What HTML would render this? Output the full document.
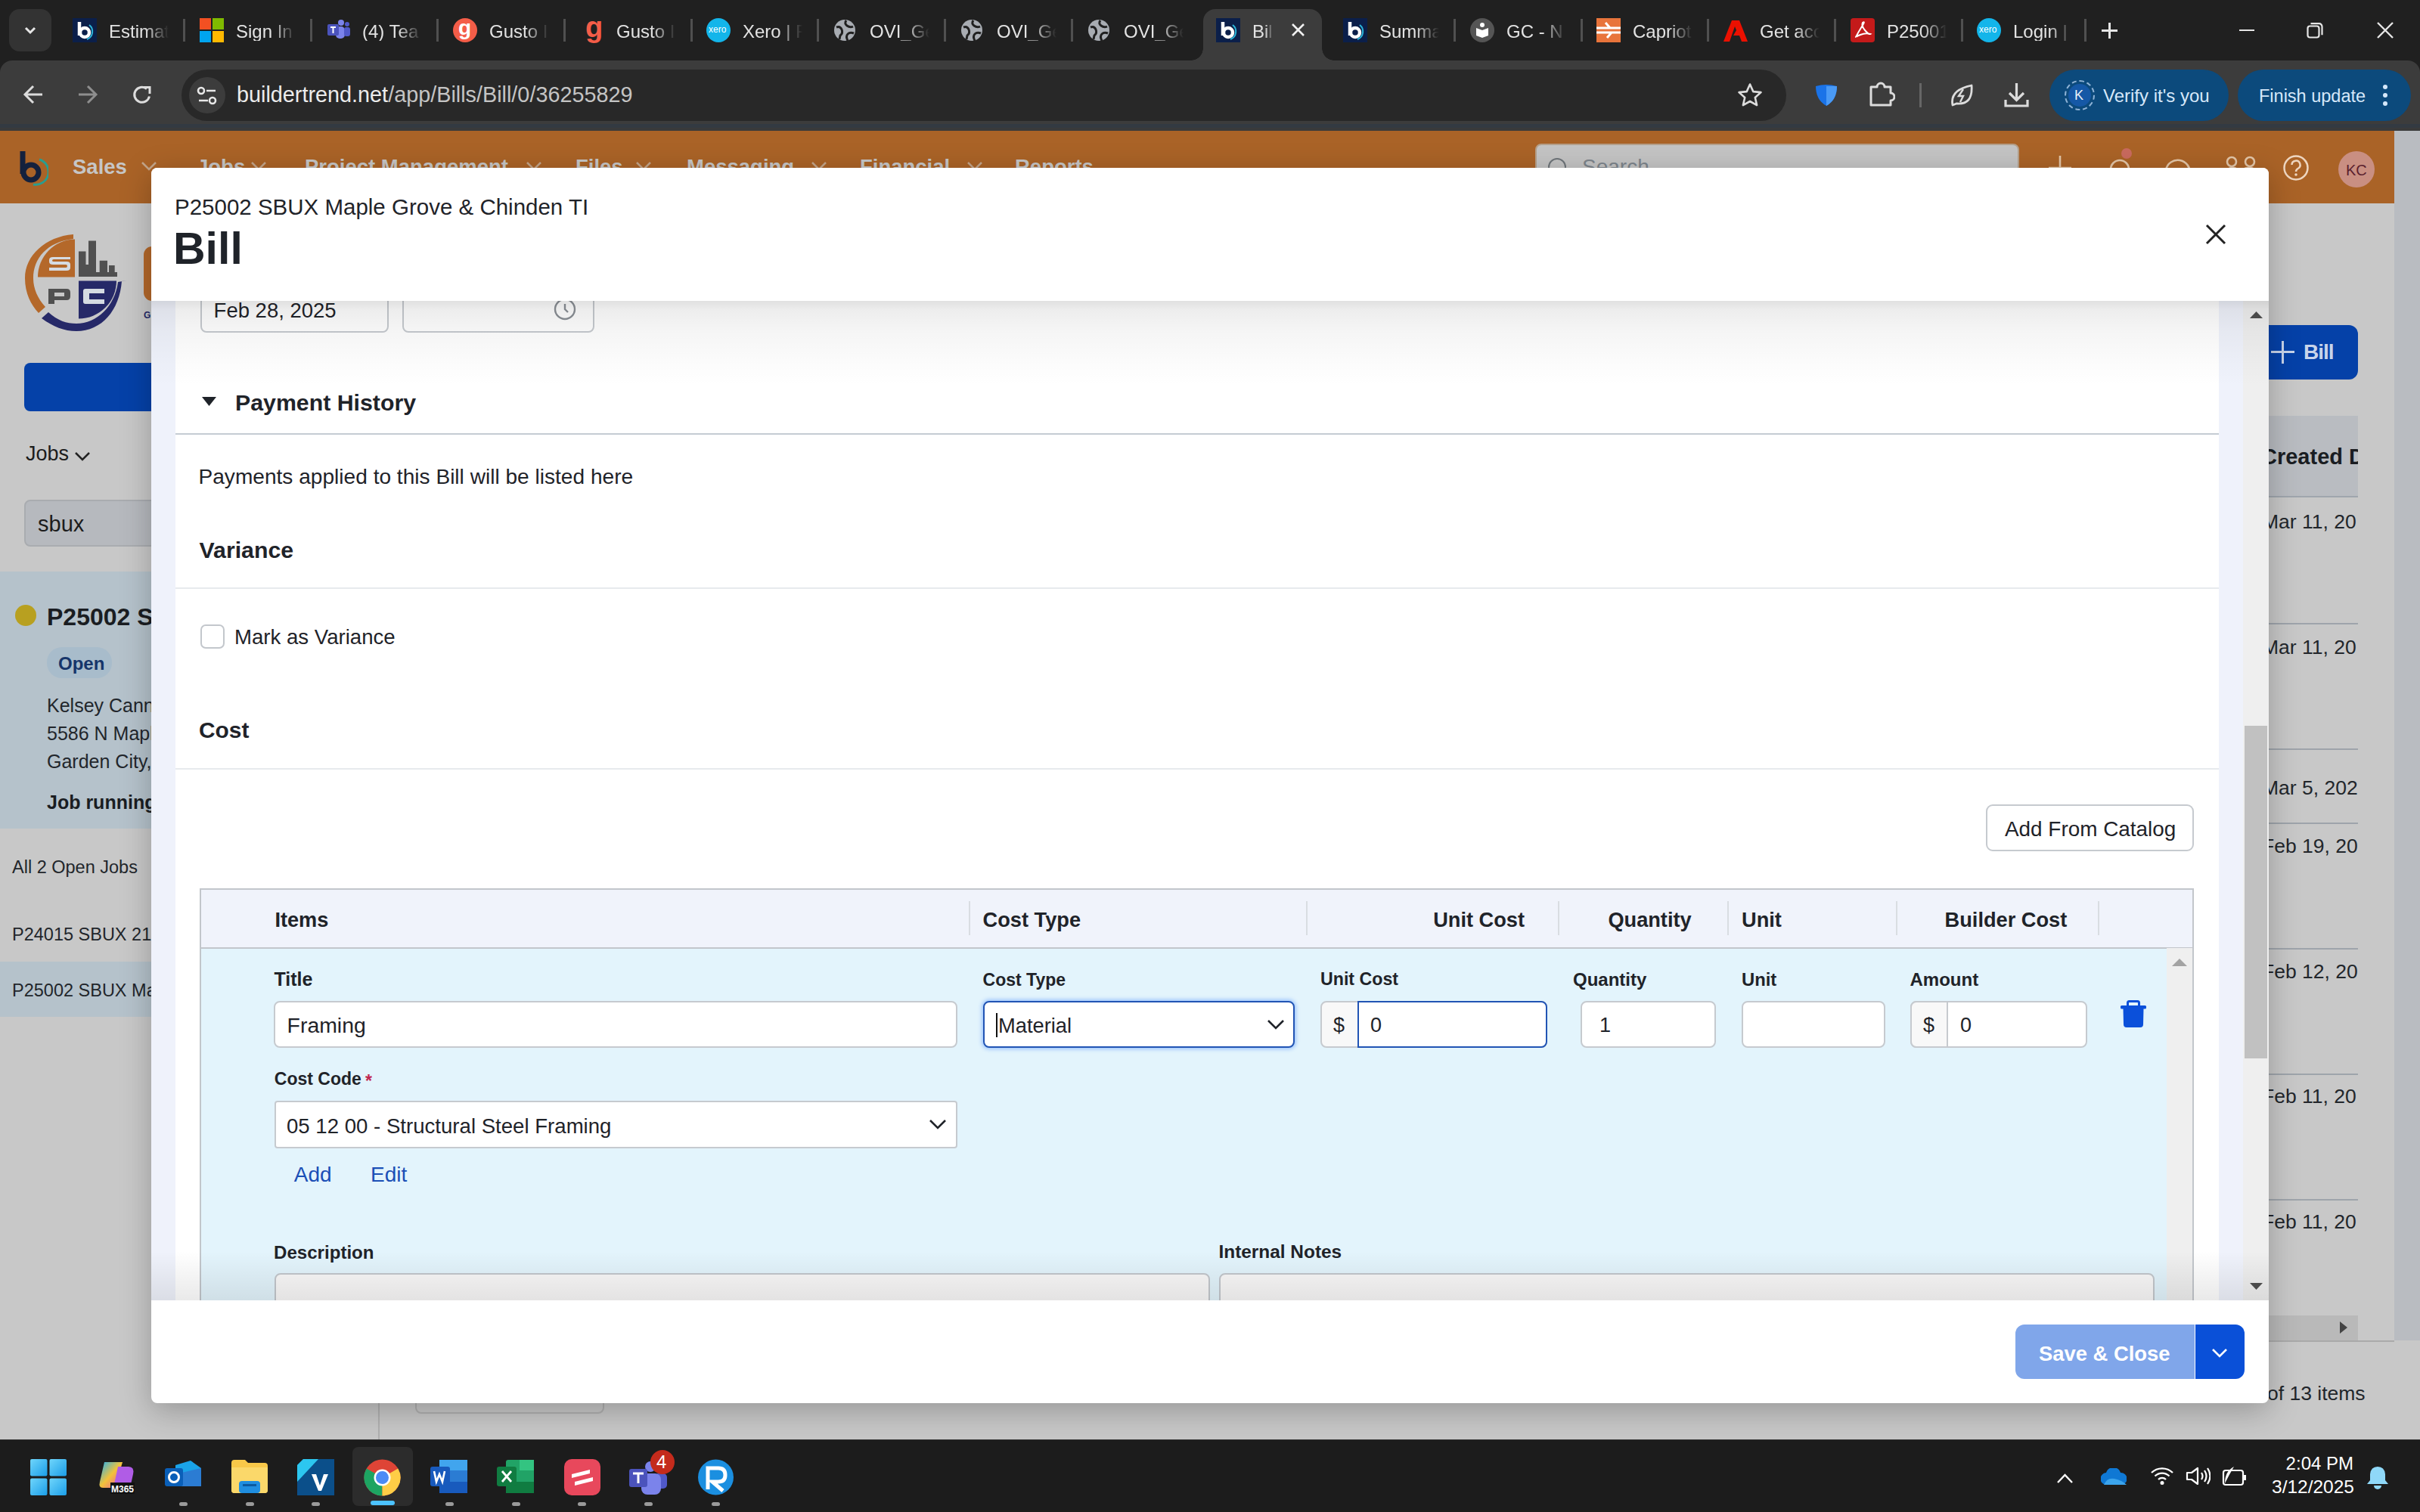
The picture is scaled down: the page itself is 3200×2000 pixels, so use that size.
<!DOCTYPE html>
<html><head><meta charset="utf-8">
<style>
*{box-sizing:border-box;margin:0;padding:0}
html,body{width:3200px;height:2000px;overflow:hidden;background:#c8c8c8;font-family:"Liberation Sans",sans-serif}
.a{position:absolute}
.t{position:absolute;white-space:nowrap;line-height:1}
/* chrome */
#tabs{left:0;top:0;width:3200px;height:100px;background:#202020}
#toolbar{left:0;top:80px;width:3200px;height:84px;background:#3c3c3c;border-radius:16px 16px 0 0}
/* page */
.navi{top:207px;font-size:27.5px;font-weight:bold;color:#c6c6c6}
#modal{left:200px;top:222px;width:2800px;height:1634px;background:#fff;border-radius:8px;overflow:hidden;box-shadow:0 10px 40px rgba(0,0,0,.25)}
#taskbar{left:0;top:1904px;width:3200px;height:96px;background:#1c1c1c;border-top:1px solid #2e2e2e}
</style></head>
<body>
<div id="tabs" class="a">
 <div class="a" style="left:12px;top:12px;width:56px;height:56px;border-radius:14px;background:#333"></div>
 <svg class="a" style="left:28px;top:28px" width="24" height="24" viewBox="0 0 24 24"><path d="M6 9l6 6 6-6" fill="none" stroke="#e6e6e6" stroke-width="3"/></svg>
 <!-- active tab -->
 <div class="a" style="left:1591px;top:12px;width:157px;height:68px;background:#3c3c3c;border-radius:16px 16px 0 0"></div>
 <div class="a" style="left:1575px;top:64px;width:16px;height:16px;background:radial-gradient(circle at 0 0,transparent 15.5px,#3c3c3c 16px)"></div>
 <div class="a" style="left:1748px;top:64px;width:16px;height:16px;background:radial-gradient(circle at 100% 0,transparent 15.5px,#3c3c3c 16px)"></div>
 <div class="a" style="left:96px;top:24px;width:32px;height:32px;background:#0b1f4a"></div><svg class="a" style="left:96px;top:24px" width="32" height="32" viewBox="0 0 32 32"><path d="M9 5v18" stroke="#fff" stroke-width="4.5"/><circle cx="16" cy="19" r="6" fill="none" stroke="#fff" stroke-width="4.5"/><path d="M22 9a11 11 0 0 1-3 19" fill="none" stroke="#2bb5d9" stroke-width="2"/></svg>
<div class="t" style="left:144px;top:30px;font-size:24px;color:#e3e3e3;width:86px;overflow:hidden;-webkit-mask-image:linear-gradient(90deg,#000 55%,transparent 92%)">Estimat</div>
<div class="a" style="left:242px;top:25px;width:3px;height:30px;background:#505050"></div>
<div class="a" style="left:264px;top:24px;width:15px;height:15px;background:#f25022"></div><div class="a" style="left:281px;top:24px;width:15px;height:15px;background:#7fba00"></div><div class="a" style="left:264px;top:41px;width:15px;height:15px;background:#00a4ef"></div><div class="a" style="left:281px;top:41px;width:15px;height:15px;background:#ffb900"></div>
<div class="t" style="left:312px;top:30px;font-size:24px;color:#e3e3e3;width:86px;overflow:hidden;-webkit-mask-image:linear-gradient(90deg,#000 55%,transparent 92%)">Sign In</div>
<div class="a" style="left:410px;top:25px;width:3px;height:30px;background:#505050"></div>
<svg class="a" style="left:431px;top:24px" width="32" height="32" viewBox="0 0 32 32"><circle cx="20" cy="6" r="4" fill="#7b83eb"/><circle cx="28" cy="8" r="3" fill="#5059c9"/><rect x="13" y="11" width="12" height="16" rx="5" fill="#7b83eb"/><rect x="24" y="12" width="8" height="12" rx="3" fill="#5059c9"/><rect x="2" y="8" width="15" height="15" rx="2" fill="#4b53bc"/><path d="M6 12h7M9.5 12v8" stroke="#fff" stroke-width="2"/></svg>
<div class="t" style="left:479px;top:30px;font-size:24px;color:#e3e3e3;width:86px;overflow:hidden;-webkit-mask-image:linear-gradient(90deg,#000 55%,transparent 92%)">(4) Tea</div>
<div class="a" style="left:577px;top:25px;width:3px;height:30px;background:#505050"></div>
<div class="a" style="left:599px;top:24px;width:32px;height:32px;border-radius:16px;background:#f45d48"></div><div class="t" style="left:606px;top:23px;font-size:28px;font-weight:bold;color:#fff">g</div>
<div class="t" style="left:647px;top:30px;font-size:24px;color:#e3e3e3;width:86px;overflow:hidden;-webkit-mask-image:linear-gradient(90deg,#000 55%,transparent 92%)">Gusto I</div>
<div class="a" style="left:745px;top:25px;width:3px;height:30px;background:#505050"></div>
<div class="t" style="left:774px;top:17px;font-size:38px;font-weight:bold;color:#f45d48">g</div>
<div class="t" style="left:815px;top:30px;font-size:24px;color:#e3e3e3;width:86px;overflow:hidden;-webkit-mask-image:linear-gradient(90deg,#000 55%,transparent 92%)">Gusto I</div>
<div class="a" style="left:913px;top:25px;width:3px;height:30px;background:#505050"></div>
<div class="a" style="left:934px;top:24px;width:32px;height:32px;border-radius:16px;background:#13b5ea"></div><div class="t" style="left:937px;top:33px;font-size:12px;color:#fff">xero</div>
<div class="t" style="left:982px;top:30px;font-size:24px;color:#e3e3e3;width:86px;overflow:hidden;-webkit-mask-image:linear-gradient(90deg,#000 55%,transparent 92%)">Xero | F</div>
<div class="a" style="left:1080px;top:25px;width:3px;height:30px;background:#505050"></div>
<svg class="a" style="left:1102px;top:25px" width="30" height="30" viewBox="0 0 30 30"><circle cx="15" cy="15" r="14" fill="#a8acb2"/><path d="M4 11q5-2 7 3t-2 8l-1 5M17 2q-3 4 1 7t8 1M27 19q-5-2-8 1t0 9" fill="none" stroke="#202020" stroke-width="3"/></svg>
<div class="t" style="left:1150px;top:30px;font-size:24px;color:#e3e3e3;width:86px;overflow:hidden;-webkit-mask-image:linear-gradient(90deg,#000 55%,transparent 92%)">OVI_Ge</div>
<div class="a" style="left:1248px;top:25px;width:3px;height:30px;background:#505050"></div>
<svg class="a" style="left:1270px;top:25px" width="30" height="30" viewBox="0 0 30 30"><circle cx="15" cy="15" r="14" fill="#a8acb2"/><path d="M4 11q5-2 7 3t-2 8l-1 5M17 2q-3 4 1 7t8 1M27 19q-5-2-8 1t0 9" fill="none" stroke="#202020" stroke-width="3"/></svg>
<div class="t" style="left:1318px;top:30px;font-size:24px;color:#e3e3e3;width:86px;overflow:hidden;-webkit-mask-image:linear-gradient(90deg,#000 55%,transparent 92%)">OVI_Ge</div>
<div class="a" style="left:1416px;top:25px;width:3px;height:30px;background:#505050"></div>
<svg class="a" style="left:1438px;top:25px" width="30" height="30" viewBox="0 0 30 30"><circle cx="15" cy="15" r="14" fill="#a8acb2"/><path d="M4 11q5-2 7 3t-2 8l-1 5M17 2q-3 4 1 7t8 1M27 19q-5-2-8 1t0 9" fill="none" stroke="#202020" stroke-width="3"/></svg>
<div class="t" style="left:1486px;top:30px;font-size:24px;color:#e3e3e3;width:86px;overflow:hidden;-webkit-mask-image:linear-gradient(90deg,#000 55%,transparent 92%)">OVI_Ge</div>
<div class="a" style="left:1608px;top:24px;width:32px;height:32px;background:#0b1f4a"></div><svg class="a" style="left:1608px;top:24px" width="32" height="32" viewBox="0 0 32 32"><path d="M9 5v18" stroke="#fff" stroke-width="4.5"/><circle cx="16" cy="19" r="6" fill="none" stroke="#fff" stroke-width="4.5"/><path d="M22 9a11 11 0 0 1-3 19" fill="none" stroke="#2bb5d9" stroke-width="2"/></svg>
<div class="t" style="left:1656px;top:30px;font-size:24px;color:#e3e3e3;width:30px;overflow:hidden;-webkit-mask-image:linear-gradient(90deg,#000 55%,transparent 92%)">Bill</div>
<svg class="a" style="left:1708px;top:31px" width="17" height="17" viewBox="0 0 17 17"><path d="M1 1l15 15M16 1L1 16" stroke="#f0f0f0" stroke-width="2.6"/></svg>
<div class="a" style="left:1776px;top:24px;width:32px;height:32px;background:#0b1f4a"></div><svg class="a" style="left:1776px;top:24px" width="32" height="32" viewBox="0 0 32 32"><path d="M9 5v18" stroke="#fff" stroke-width="4.5"/><circle cx="16" cy="19" r="6" fill="none" stroke="#fff" stroke-width="4.5"/><path d="M22 9a11 11 0 0 1-3 19" fill="none" stroke="#2bb5d9" stroke-width="2"/></svg>
<div class="t" style="left:1824px;top:30px;font-size:24px;color:#e3e3e3;width:86px;overflow:hidden;-webkit-mask-image:linear-gradient(90deg,#000 55%,transparent 92%)">Summa</div>
<div class="a" style="left:1922px;top:25px;width:3px;height:30px;background:#505050"></div>
<div class="a" style="left:1944px;top:24px;width:32px;height:32px;border-radius:16px;background:#555"></div><svg class="a" style="left:1944px;top:24px" width="32" height="32" viewBox="0 0 32 32"><circle cx="16" cy="9" r="3" fill="#fff"/><path d="M8 13l8 3 8-3v10l-8 3-8-3z" fill="#fff"/></svg>
<div class="t" style="left:1992px;top:30px;font-size:24px;color:#e3e3e3;width:86px;overflow:hidden;-webkit-mask-image:linear-gradient(90deg,#000 55%,transparent 92%)">GC - N</div>
<div class="a" style="left:2090px;top:25px;width:3px;height:30px;background:#505050"></div>
<div class="a" style="left:2111px;top:24px;width:32px;height:32px;background:#e8743b"></div><svg class="a" style="left:2111px;top:24px" width="32" height="32" viewBox="0 0 32 32"><path d="M0 13h32M0 19h32M12 6l6 7M20 19l-6 7" stroke="#fff" stroke-width="3"/></svg>
<div class="t" style="left:2159px;top:30px;font-size:24px;color:#e3e3e3;width:86px;overflow:hidden;-webkit-mask-image:linear-gradient(90deg,#000 55%,transparent 92%)">Capriot</div>
<div class="a" style="left:2257px;top:25px;width:3px;height:30px;background:#505050"></div>
<svg class="a" style="left:2279px;top:26px" width="32" height="30" viewBox="0 0 32 30"><path d="M11 1h10l11 28h-8l-3-8h-8l4-7 2 5 -4-10L8 29H0z" fill="#eb1000"/></svg>
<div class="t" style="left:2327px;top:30px;font-size:24px;color:#e3e3e3;width:86px;overflow:hidden;-webkit-mask-image:linear-gradient(90deg,#000 55%,transparent 92%)">Get acc</div>
<div class="a" style="left:2425px;top:25px;width:3px;height:30px;background:#505050"></div>
<div class="a" style="left:2447px;top:24px;width:32px;height:32px;border-radius:4px;background:#c41a1a"></div><svg class="a" style="left:2447px;top:24px" width="32" height="32" viewBox="0 0 32 32"><path d="M7 25q3-6 8-14t1-5q-2 4 3 10t7 5q-6-2-13 1t-6 3" fill="none" stroke="#fff" stroke-width="2"/></svg>
<div class="t" style="left:2495px;top:30px;font-size:24px;color:#e3e3e3;width:86px;overflow:hidden;-webkit-mask-image:linear-gradient(90deg,#000 55%,transparent 92%)">P25001</div>
<div class="a" style="left:2593px;top:25px;width:3px;height:30px;background:#505050"></div>
<div class="a" style="left:2614px;top:24px;width:32px;height:32px;border-radius:16px;background:#13b5ea"></div><div class="t" style="left:2617px;top:33px;font-size:12px;color:#fff">xero</div>
<div class="t" style="left:2662px;top:30px;font-size:24px;color:#e3e3e3;width:86px;overflow:hidden;-webkit-mask-image:linear-gradient(90deg,#000 55%,transparent 92%)">Login |</div>
<div class="a" style="left:2756px;top:25px;width:3px;height:30px;background:#505050"></div>
 <div class="a" style="left:2779px;top:39px;width:21px;height:3px;background:#e6e6e6"></div>
 <div class="a" style="left:2788px;top:30px;width:3px;height:21px;background:#e6e6e6"></div>
 <div class="a" style="left:2961px;top:39px;width:20px;height:2px;background:#e6e6e6"></div>
 <svg class="a" style="left:3050px;top:29px" width="24" height="22" viewBox="0 0 24 22"><rect x="1.5" y="5.5" width="15" height="15" rx="3" fill="none" stroke="#e6e6e6" stroke-width="2.2"/><path d="M5.5 2.2h11a4 4 0 0 1 4 4v11" fill="none" stroke="#e6e6e6" stroke-width="2.2"/></svg>
 <svg class="a" style="left:3143px;top:29px" width="22" height="22" viewBox="0 0 22 22"><path d="M1 1l20 20M21 1L1 21" stroke="#e6e6e6" stroke-width="2.4"/></svg>
</div>
<div id="toolbar" class="a">
 <svg class="a" style="left:30px;top:32px" width="28" height="26" viewBox="0 0 28 26"><path d="M26 13H4M14 2L3 13l11 11" fill="none" stroke="#dcdcdc" stroke-width="3"/></svg>
 <svg class="a" style="left:102px;top:32px" width="28" height="26" viewBox="0 0 28 26"><path d="M2 13h22M14 2l11 11-11 11" fill="none" stroke="#8e8e8e" stroke-width="3"/></svg>
 <svg class="a" style="left:174px;top:32px" width="28" height="28" viewBox="0 0 28 28"><path d="M23.5 15.5A10 10 0 1 1 20 5.5" fill="none" stroke="#dcdcdc" stroke-width="3"/><path d="M15.5 3.5h8.5v8.5" fill="none" stroke="#dcdcdc" stroke-width="3"/></svg>
 <div class="a" style="left:240px;top:12px;width:2122px;height:68px;border-radius:34px;background:#282828"></div>
 <div class="a" style="left:250px;top:22px;width:48px;height:48px;border-radius:24px;background:#3c3c3c"></div>
 <svg class="a" style="left:260px;top:32px" width="28" height="28" viewBox="0 0 28 28"><circle cx="6" cy="8" r="4" fill="none" stroke="#e8e8e8" stroke-width="2.6"/><path d="M13 8h12M3 21h12" stroke="#e8e8e8" stroke-width="2.6"/><circle cx="21" cy="21" r="4" fill="none" stroke="#e8e8e8" stroke-width="2.6"/></svg>
 <div class="t" style="left:313px;top:31px;font-size:28.8px;color:#ececec;letter-spacing:0px">buildertrend.net<span style="color:#c4c4c4">/app/Bills/Bill/0/36255829</span></div>
 <svg class="a" style="left:2297px;top:29px" width="34" height="33" viewBox="0 0 34 33"><path d="M17 2.5l4.3 9.6 10.2 1-7.7 6.9 2.3 10.1L17 25l-9.1 5.1 2.3-10.1L2.5 13.1l10.2-1z" fill="none" stroke="#dcdcdc" stroke-width="2.6" stroke-linejoin="round"/></svg>
 <svg class="a" style="left:2398px;top:30px" width="34" height="32" viewBox="0 0 34 32"><path d="M3 4q14-4 28 0q0 18-14 26Q3 22 3 4z" fill="#1a73e8"/><path d="M17 4q7 0 14 0q0 18-14 26z" fill="#4a9af5"/></svg>
 <svg class="a" style="left:2470px;top:26px" width="36" height="36" viewBox="0 0 36 36"><path d="M4 9h8a5 5 0 0 1 10 0h8v8a5 5 0 0 1 0 10v6H4z" fill="none" stroke="#dcdcdc" stroke-width="3" stroke-linejoin="round"/></svg>
 <div class="a" style="left:2538px;top:30px;width:3px;height:32px;background:#666"></div>
 <svg class="a" style="left:2577px;top:29px" width="34" height="34" viewBox="0 0 34 34"><path d="M5 30Q1 10 30 4q2 26-20 24z" fill="none" stroke="#dcdcdc" stroke-width="2.8" stroke-linejoin="round"/><path d="M19 9l-6 9h6l-4 8" fill="none" stroke="#dcdcdc" stroke-width="2.4"/></svg>
 <svg class="a" style="left:2649px;top:28px" width="35" height="35" viewBox="0 0 35 35"><path d="M17.5 2v22M8 15l9.5 9.5L27 15M3 24v8h29v-8" fill="none" stroke="#dcdcdc" stroke-width="3.2"/></svg>
 <div class="a" style="left:2710px;top:12px;width:237px;height:68px;border-radius:34px;background:#0c4a7c"></div>
 <div class="a" style="left:2730px;top:26px;width:40px;height:40px;border-radius:20px;border:2.5px dashed #8fb3d6"></div>
 <div class="a" style="left:2735px;top:31px;width:30px;height:30px;border-radius:15px;background:#1558a6"></div>
 <div class="t" style="left:2743px;top:37px;font-size:18px;color:#e8f0f8">K</div>
 <div class="t" style="left:2781px;top:35px;font-size:24px;color:#d6e8fa">Verify it's you</div>
 <div class="a" style="left:2959px;top:12px;width:229px;height:68px;border-radius:34px;background:#0c4a7c"></div>
 <div class="t" style="left:2987px;top:36px;font-size:23.5px;color:#d6e8fa">Finish update</div>
 <div class="a" style="left:3151px;top:32px;width:6px;height:6px;border-radius:3px;background:#d6e8fa"></div>
 <div class="a" style="left:3151px;top:43px;width:6px;height:6px;border-radius:3px;background:#d6e8fa"></div>
 <div class="a" style="left:3151px;top:54px;width:6px;height:6px;border-radius:3px;background:#d6e8fa"></div>
</div>

<div id="page">
 <div class="a" style="left:0;top:164px;width:3200px;height:5px;background:#333a42"></div>
 <div class="a" style="left:0;top:169px;width:3200px;height:5px;background:#3a3a3a"></div>
 <div class="a" style="left:0;top:173px;width:3166px;height:96px;background:#aa6327"></div>
 <div class="a" style="left:3166px;top:173px;width:34px;height:1600px;background:#b9bcc1"></div>
 <!-- nav logo -->
 <svg class="a" style="left:24px;top:198px" width="40" height="48" viewBox="0 0 40 48"><path d="M6 2v30" stroke="#14213d" stroke-width="7"/><circle cx="17" cy="30" r="10" fill="none" stroke="#14213d" stroke-width="7"/><path d="M28 13a17 17 0 0 1-8 33" fill="none" stroke="#2a9d8f" stroke-width="3"/></svg>
 <div class="t navi" style="left:96px">Sales</div>
 <div class="t navi" style="left:260px">Jobs</div>
 <div class="t navi" style="left:403px">Project Management</div>
 <div class="t navi" style="left:761px">Files</div>
 <div class="t navi" style="left:908px">Messaging</div>
 <div class="t navi" style="left:1137px">Financial</div>
 <div class="t navi" style="left:1342px">Reports</div>
 <svg class="a" style="left:186px;top:213px" width="22" height="14" viewBox="0 0 22 14"><path d="M2 2l9 9 9-9" fill="none" stroke="#c3a58a" stroke-width="2.5"/></svg>
 <svg class="a" style="left:331px;top:213px" width="22" height="14" viewBox="0 0 22 14"><path d="M2 2l9 9 9-9" fill="none" stroke="#c3a58a" stroke-width="2.5"/></svg>
 <svg class="a" style="left:695px;top:213px" width="22" height="14" viewBox="0 0 22 14"><path d="M2 2l9 9 9-9" fill="none" stroke="#c3a58a" stroke-width="2.5"/></svg>
 <svg class="a" style="left:840px;top:213px" width="22" height="14" viewBox="0 0 22 14"><path d="M2 2l9 9 9-9" fill="none" stroke="#c3a58a" stroke-width="2.5"/></svg>
 <svg class="a" style="left:1072px;top:213px" width="22" height="14" viewBox="0 0 22 14"><path d="M2 2l9 9 9-9" fill="none" stroke="#c3a58a" stroke-width="2.5"/></svg>
 <svg class="a" style="left:1278px;top:213px" width="22" height="14" viewBox="0 0 22 14"><path d="M2 2l9 9 9-9" fill="none" stroke="#c3a58a" stroke-width="2.5"/></svg>
 <div class="a" style="left:2030px;top:190px;width:640px;height:64px;border-radius:8px;background:#c4c4c4;border:2px solid #b5a08a"></div>
 <div class="a" style="left:2047px;top:209px;width:24px;height:24px;border-radius:12px;border:2.5px solid #6f757a"></div>
 <div class="t" style="left:2092px;top:207px;font-size:28px;color:#7d858c">Search</div>
 <svg class="a" style="left:2700px;top:190px" width="300" height="40" viewBox="2700 190 300 40">
  <path d="M2724 206v22M2709 222h30" stroke="#e3c6a8" stroke-width="2.6" fill="none"/>
  <path d="M2791 232v-8a12 12 0 0 1 24 0v8" stroke="#e3c6a8" stroke-width="2.6" fill="none"/>
  <path d="M2866 236a16 16 0 1 1 24 4l6 4" stroke="#e3c6a8" stroke-width="2.6" fill="none"/>
  <circle cx="2951" cy="214" r="6" stroke="#e3c6a8" stroke-width="2.6" fill="none"/>
  <circle cx="2975" cy="214" r="6" stroke="#e3c6a8" stroke-width="2.6" fill="none"/>
  <path d="M2942 232q2-10 10-10t10 8q2-8 12-8t10 10" stroke="#e3c6a8" stroke-width="2.6" fill="none"/>
 </svg>
 <div class="a" style="left:2805px;top:196px;width:14px;height:14px;border-radius:7px;background:#c96a5e"></div>
 <svg class="a" style="left:3017px;top:203px" width="38" height="38" viewBox="0 0 38 38"><circle cx="19" cy="19" r="15.5" fill="none" stroke="#eed6c0" stroke-width="2.5"/><path d="M13.5 15a5.5 5.5 0 1 1 8 5q-2.5 1.5-2.5 4" fill="none" stroke="#eed6c0" stroke-width="2.5"/><circle cx="19" cy="28" r="1.8" fill="#eed6c0"/></svg>
 <div class="a" style="left:3092px;top:200px;width:48px;height:48px;border-radius:24px;background:#c98f82"></div>
 <div class="t" style="left:3102px;top:215px;font-size:20px;color:#5b1f2e">KC</div>
 <!-- left sidebar -->
 <svg class="a" style="left:20px;top:295px" width="190" height="150" viewBox="20 295 190 150">
  <path d="M97 310C60 313 33 338 33 368C33 388 41 403 51 414L60 406C50 395 44 382 44 368C44 342 62 320 97 316Z" fill="#b4682a"/>
  <path d="M55 421C70 432 85 438 101 438C135 438 158 410 161 372L168 371L156 373C152 405 128 428 101 428C88 428 76 424 64 413Z" fill="#262968"/>
  <path d="M99 316.5A50 50 0 0 0 50 366.5H99z" fill="#b4682a"/>
  <path d="M104 371.5H154A50 50 0 0 1 104 421.5z" fill="#262968"/>
  <path d="M104 366V332.4H113.5V350H117V318.6H127V360H131.7V344.7H142V360H144V350.9H151.7V360H155V366z" fill="#505050"/>
  <path d="M93 340H70q-5 0-5 4v2q0 4 5 4h17q2 0 2 2t-2 2H65v4h23q5 0 5-4v-4q0-4-5-4H71q-2 0-2-1.5t2-1.5h22z" fill="#d5dbe2"/>
  <path d="M64 382h24q5 0 5 5v5q0 5-5 5H72v5H64z M72 387v5h13v-5z" fill="#505050" fill-rule="evenodd"/>
  <path d="M138 382H113q-3 0-3 3v14q0 3 3 3h25v-6H118v-8h20z" fill="#d5dbe2"/>
</svg>
 <div class="a" style="left:190px;top:326px;width:20px;height:72px;border-radius:11px 0 0 11px;background:#b4682a"></div><div class="t" style="left:190px;top:411px;font-size:12px;font-weight:bold;color:#262968">G</div>
 <div class="a" style="left:32px;top:480px;width:180px;height:64px;border-radius:8px;background:#0541a8"></div>
 <div class="t" style="left:34px;top:587px;font-size:27px;color:#1c1c1c">Jobs</div>
 <svg class="a" style="left:98px;top:597px" width="22" height="13" viewBox="0 0 22 13"><path d="M2 2l9 9 9-9" fill="none" stroke="#222" stroke-width="2.5"/></svg>
 <div class="a" style="left:32px;top:661px;width:180px;height:62px;border-radius:8px;background:#b6b9be;border:2px solid #a9acb0"></div>
 <div class="t" style="left:50px;top:679px;font-size:29px;color:#1c1c1c">sbux</div>
 <div class="a" style="left:0;top:756px;width:212px;height:340px;background:#b5c2cb"></div>
 <div class="a" style="left:20px;top:800px;width:28px;height:28px;border-radius:14px;background:#b8a020"></div>
 <div class="t" style="left:62px;top:800px;font-size:32px;font-weight:bold;color:#1a1d22">P25002 SBUX</div>
 <div class="a" style="left:62px;top:856px;width:86px;height:41px;border-radius:20px;background:#a8bccb"></div>
 <div class="t" style="left:77px;top:866px;font-size:24px;font-weight:bold;color:#16356a">Open</div>
 <div class="t" style="left:62px;top:921px;font-size:25px;color:#22262b">Kelsey Cannon</div>
 <div class="t" style="left:62px;top:958px;font-size:25px;color:#22262b">5586 N Maple</div>
 <div class="t" style="left:62px;top:995px;font-size:25px;color:#22262b">Garden City, ID</div>
 <div class="t" style="left:62px;top:1049px;font-size:25px;font-weight:bold;color:#1a1d22">Job running</div>
 <div class="t" style="left:16px;top:1136px;font-size:23.5px;color:#22262b">All 2 Open Jobs</div>
 <div class="t" style="left:16px;top:1225px;font-size:23.5px;color:#22262b">P24015 SBUX 21st</div>
 <div class="a" style="left:0;top:1272px;width:212px;height:73px;background:#b5c2cb"></div>
 <div class="t" style="left:16px;top:1299px;font-size:23.5px;color:#22262b">P25002 SBUX Map</div>
 <div class="a" style="left:500px;top:1850px;width:2px;height:54px;background:#b0b0b0"></div>
 <div class="a" style="left:549px;top:1820px;width:250px;height:50px;border:2px solid #b0b0b0;border-radius:8px"></div>
 <!-- right side -->
 <div class="a" style="left:2960px;top:430px;width:158px;height:72px;border-radius:12px;background:#0541a8"></div>
 <div class="a" style="left:3017px;top:451px;width:3px;height:30px;background:#c8d4ea"></div>
 <div class="a" style="left:3003px;top:464px;width:31px;height:3px;background:#c8d4ea"></div>
 <div class="t" style="left:3046px;top:452px;font-size:28px;font-weight:bold;color:#c8d4ea;letter-spacing:-1px">Bill</div>
 <div class="a" style="left:2960px;top:550px;width:158px;height:108px;background:#b9bcc1;border-bottom:2px solid #9fa6ad"></div>
<div class="a" style="left:2960px;top:0;width:158px;height:1740px;overflow:hidden"><div class="a" style="left:-2960px;top:0"> <div class="t" style="left:2990px;top:590px;font-size:29px;font-weight:bold;color:#1a1d22">Created D</div></div></div>
<div class="a" style="left:2960px;top:0;width:158px;height:1740px;overflow:hidden"><div class="a" style="left:-2960px;top:0"> <div class="t" style="left:2991px;top:677px;font-size:26.5px;color:#22262b">Mar 11, 20</div></div></div>
<div class="a" style="left:2960px;top:824px;width:158px;height:2px;background:#9ea4ab"></div>
<div class="a" style="left:2960px;top:0;width:158px;height:1740px;overflow:hidden"><div class="a" style="left:-2960px;top:0"><div class="t" style="left:2991px;top:843px;font-size:26.5px;color:#22262b">Mar 11, 20</div></div></div>
<div class="a" style="left:2960px;top:990px;width:158px;height:2px;background:#9ea4ab"></div>
<div class="a" style="left:2960px;top:0;width:158px;height:1740px;overflow:hidden"><div class="a" style="left:-2960px;top:0"><div class="t" style="left:2991px;top:1029px;font-size:26.5px;color:#22262b">Mar 5, 202</div></div></div>
<div class="a" style="left:2960px;top:1088px;width:158px;height:2px;background:#9ea4ab"></div>
<div class="a" style="left:2960px;top:0;width:158px;height:1740px;overflow:hidden"><div class="a" style="left:-2960px;top:0"><div class="t" style="left:2991px;top:1106px;font-size:26.5px;color:#22262b">Feb 19, 20</div></div></div>
<div class="a" style="left:2960px;top:1254px;width:158px;height:2px;background:#9ea4ab"></div>
<div class="a" style="left:2960px;top:0;width:158px;height:1740px;overflow:hidden"><div class="a" style="left:-2960px;top:0"><div class="t" style="left:2991px;top:1272px;font-size:26.5px;color:#22262b">Feb 12, 20</div></div></div>
<div class="a" style="left:2960px;top:1420px;width:158px;height:2px;background:#9ea4ab"></div>
<div class="a" style="left:2960px;top:0;width:158px;height:1740px;overflow:hidden"><div class="a" style="left:-2960px;top:0"><div class="t" style="left:2991px;top:1437px;font-size:26.5px;color:#22262b">Feb 11, 20</div></div></div>
<div class="a" style="left:2960px;top:1586px;width:158px;height:2px;background:#9ea4ab"></div>
<div class="a" style="left:2960px;top:0;width:158px;height:1740px;overflow:hidden"><div class="a" style="left:-2960px;top:0"><div class="t" style="left:2991px;top:1603px;font-size:26.5px;color:#22262b">Feb 11, 20</div></div></div>
 <div class="a" style="left:2960px;top:1740px;width:158px;height:33px;background:#b9b9b9"></div>
 <svg class="a" style="left:3093px;top:1747px" width="12" height="18" viewBox="0 0 12 18"><path d="M1 1l10 8-10 8z" fill="#444"/></svg>
 <div class="a" style="left:2960px;top:1773px;width:206px;height:2px;background:#aaa"></div>
 <div class="t" style="left:2998px;top:1830px;font-size:26.5px;color:#22262b">of 13 items</div>
</div>

<div id="modal" class="a"><div class="a" style="left:0;top:176px;width:2800px;height:1322px;overflow:hidden"><div class="a" style="left:0.0px;top:0.0px;width:32.0px;height:1322.0px;background:#eff2fb"></div>
<div class="a" style="left:2734.0px;top:0.0px;width:32.0px;height:1322.0px;background:#eff2fb"></div>
<div class="a" style="left:2766.0px;top:0.0px;width:34.0px;height:1322.0px;background:#efefef"></div>
<div class="a" style="left:2768.0px;top:562.0px;width:30.0px;height:440.0px;background:#c1c1c1"></div>
<svg class="a" style="left:2775.0px;top:14.0px" width="17" height="9" viewBox="0 0 17 9"><path d="M0 9L8.5 0 17 9z" fill="#505050"/></svg>
<svg class="a" style="left:2775.0px;top:1299.0px" width="17" height="9" viewBox="0 0 17 9"><path d="M0 0h17L8.5 9z" fill="#505050"/></svg>
<div class="a" style="left:64.5px;top:-38.0px;width:249.5px;height:80.0px;border:2px solid #c6cacf;border-radius:8px;background:#fff"></div>
<div class="t" style="left:82.6px;top:-1.5px;font-size:27.5px;color:#1f2329">Feb 28, 2025</div>
<div class="a" style="left:331.6px;top:-38.0px;width:254.4px;height:80.0px;border:2px solid #c6cacf;border-radius:8px;background:#fff"></div>
<svg class="a" style="left:532.0px;top:-4.0px" width="30" height="30" viewBox="0 0 30 30"><circle cx="15" cy="15" r="13" fill="none" stroke="#8b9096" stroke-width="2.4"/><path d="M15 8v7l4 4" fill="none" stroke="#8b9096" stroke-width="2.4"/></svg>
<svg class="a" style="left:67.0px;top:127.0px" width="19" height="12" viewBox="0 0 19 12"><path d="M0 0h19L9.5 12z" fill="#1f2329"/></svg>
<div class="t" style="left:111.0px;top:120.2px;font-size:30.3px;font-weight:bold;color:#1f2329">Payment History</div>
<div class="a" style="left:32.0px;top:174.5px;width:2702.0px;height:2.0px;background:#c5ccd3"></div>
<div class="t" style="left:62.5px;top:218.6px;font-size:28.1px;color:#1f2329">Payments applied to this Bill will be listed here</div>
<div class="t" style="left:63.5px;top:315.0px;font-size:30.3px;font-weight:bold;color:#1f2329">Variance</div>
<div class="a" style="left:32.0px;top:379.0px;width:2702.0px;height:2.0px;background:#e7eaed"></div>
<div class="a" style="left:64.5px;top:428.0px;width:32.0px;height:32.0px;border:2px solid #c3c7cc;border-radius:7px;background:#fff"></div>
<div class="t" style="left:110.0px;top:431.3px;font-size:27.6px;color:#1f2329">Mark as Variance</div>
<div class="t" style="left:63.0px;top:553.4px;font-size:29.9px;font-weight:bold;color:#1f2329">Cost</div>
<div class="a" style="left:32.0px;top:617.5px;width:2702.0px;height:2.0px;background:#e7eaed"></div>
<div class="a" style="left:2425.7px;top:665.6px;width:275.3px;height:62.7px;border:2px solid #c6cacf;border-radius:9px;background:#fff"></div>
<div class="t" style="left:2451.0px;top:684.5px;font-size:27.9px;color:#1f2329">Add From Catalog</div>
<div class="a" style="left:64.0px;top:777.0px;width:2637.0px;height:625.0px;border:2px solid #c2c6cb;background:#e3f4fc"></div>
<div class="a" style="left:66.0px;top:779.0px;width:2633.0px;height:78.0px;background:#f0f3fb;border-bottom:2px solid #c2c6cb"></div>
<div class="a" style="left:1081.0px;top:794.0px;width:2.0px;height:45.0px;background:#d9dde2"></div>
<div class="a" style="left:1527.0px;top:794.0px;width:2.0px;height:45.0px;background:#d9dde2"></div>
<div class="a" style="left:1860.4px;top:794.0px;width:2.0px;height:45.0px;background:#d9dde2"></div>
<div class="a" style="left:2083.5px;top:794.0px;width:2.0px;height:45.0px;background:#d9dde2"></div>
<div class="a" style="left:2306.6px;top:794.0px;width:2.0px;height:45.0px;background:#d9dde2"></div>
<div class="a" style="left:2574.4px;top:794.0px;width:2.0px;height:45.0px;background:#d9dde2"></div>
<div class="t" style="left:163.4px;top:805.0px;font-size:27.2px;font-weight:bold;color:#1f2329">Items</div>
<div class="t" style="left:1099.6px;top:805.0px;font-size:27.2px;font-weight:bold;color:#1f2329">Cost Type</div>
<div class="t" style="left:1670.0px;top:805.0px;font-size:27.2px;font-weight:bold;color:#1f2329;width:146px;text-align:right">Unit Cost</div>
<div class="t" style="left:1926.4px;top:805.0px;font-size:27.2px;font-weight:bold;color:#1f2329">Quantity</div>
<div class="t" style="left:2103.0px;top:805.0px;font-size:27.2px;font-weight:bold;color:#1f2329">Unit</div>
<div class="t" style="left:2371.6px;top:805.0px;font-size:27.2px;font-weight:bold;color:#1f2329">Builder Cost</div>
<div class="a" style="left:2665.0px;top:856.0px;width:34.0px;height:546.0px;background:#efefef"></div>
<svg class="a" style="left:2672.0px;top:870.0px" width="20" height="10" viewBox="0 0 20 10"><path d="M0 10L10 0 20 10z" fill="#a3a3a3"/></svg>
<div class="t" style="left:162.4px;top:884.8px;font-size:25px;font-weight:bold;color:#1f2329">Title</div>
<div class="t" style="left:1099.6px;top:886.5px;font-size:23px;font-weight:bold;color:#1f2329">Cost Type</div>
<div class="t" style="left:1546.0px;top:886.4px;font-size:23.2px;font-weight:bold;color:#1f2329">Unit Cost</div>
<div class="t" style="left:1880.0px;top:885.7px;font-size:24px;font-weight:bold;color:#1f2329">Quantity</div>
<div class="t" style="left:2103.0px;top:885.9px;font-size:23.8px;font-weight:bold;color:#1f2329">Unit</div>
<div class="t" style="left:2325.5px;top:885.7px;font-size:24px;font-weight:bold;color:#1f2329">Amount</div>
<div class="a" style="left:162.4px;top:925.6px;width:903.6px;height:62.0px;border:2px solid #c6cacf;border-radius:8px;background:#fff"></div>
<div class="t" style="left:179.6px;top:943.6px;font-size:28.4px;color:#1f2329">Framing</div>
<div class="a" style="left:1099.6px;top:925.6px;width:412.4px;height:62.0px;border:2.5px solid #2154b4;border-radius:8px;background:#fff;box-shadow:0 0 5px 2px rgba(70,140,255,.45)"></div>
<div class="a" style="left:1116.5px;top:942.0px;width:2.5px;height:32.0px;background:#111"></div>
<div class="t" style="left:1120.0px;top:944.5px;font-size:27.3px;color:#1f2329">Material</div>
<svg class="a" style="left:1475.0px;top:949.0px" width="24" height="16" viewBox="0 0 24 16"><path d="M2 3l10 10 10-10" fill="none" stroke="#1f2329" stroke-width="2.6"/></svg>
<div class="a" style="left:1546.0px;top:925.6px;width:300.0px;height:62.0px;border:2px solid #c6cacf;border-radius:8px;background:#f8f8f8"></div>
<div class="a" style="left:1594.5px;top:925.6px;width:251.5px;height:62.0px;border:2px solid #2154b4;border-radius:0 8px 8px 0;background:#fff"></div>
<div class="t" style="left:1563.0px;top:944.7px;font-size:27px;color:#1f2329">$</div>
<div class="t" style="left:1612.0px;top:944.7px;font-size:27px;color:#1f2329">0</div>
<div class="a" style="left:1890.4px;top:925.6px;width:178.6px;height:62.0px;border:2px solid #c6cacf;border-radius:8px;background:#fff"></div>
<div class="t" style="left:1915.0px;top:944.7px;font-size:27px;color:#1f2329">1</div>
<div class="a" style="left:2103.0px;top:925.6px;width:189.7px;height:62.0px;border:2px solid #c6cacf;border-radius:8px;background:#fff"></div>
<div class="a" style="left:2325.5px;top:925.6px;width:234.5px;height:62.0px;border:2px solid #c6cacf;border-radius:8px;background:#fff"></div>
<div class="a" style="left:2325.5px;top:925.6px;width:50.8px;height:62.0px;border:2px solid #c6cacf;border-radius:8px 0 0 8px;background:#f8f8f8"></div>
<div class="t" style="left:2343.0px;top:944.7px;font-size:27px;color:#1f2329">$</div>
<div class="t" style="left:2392.0px;top:944.7px;font-size:27px;color:#1f2329">0</div>
<svg class="a" style="left:2603.0px;top:924.0px" width="36" height="38" viewBox="0 0 36 38"><rect x="10.5" y="2.5" width="15" height="8" rx="2" fill="none" stroke="#0b50da" stroke-width="3"/><rect x="1" y="8" width="34" height="4.5" rx="1.5" fill="#0b50da"/><path d="M4.5 12H31.5L31 33a4 4 0 0 1-4 4H9a4 4 0 0 1-4-4z" fill="#0b50da"/></svg>
<div class="t" style="left:162.8px;top:1018.4px;font-size:23px;font-weight:bold;color:#1f2329">Cost Code</div>
<div class="t" style="left:283.0px;top:1020.5px;font-size:23px;font-weight:bold;color:#c0264e">*</div>
<div class="a" style="left:162.8px;top:1057.5px;width:903.6px;height:63.1px;border:2px solid #c6cacf;border-radius:4px;background:#fff"></div>
<div class="t" style="left:179.0px;top:1078.1px;font-size:27.6px;color:#1f2329">05 12 00 - Structural Steel Framing</div>
<svg class="a" style="left:1028.0px;top:1081.0px" width="24" height="16" viewBox="0 0 24 16"><path d="M2 3l10 10 10-10" fill="none" stroke="#1f2329" stroke-width="2.6"/></svg>
<div class="t" style="left:188.8px;top:1142.0px;font-size:28px;color:#1b4fb6">Add</div>
<div class="t" style="left:290.0px;top:1142.0px;font-size:28px;color:#1b4fb6">Edit</div>
<div class="t" style="left:162.0px;top:1246.6px;font-size:24.1px;font-weight:bold;color:#1f2329">Description</div>
<div class="t" style="left:1411.5px;top:1246.3px;font-size:24.4px;font-weight:bold;color:#1f2329">Internal Notes</div>
<div class="a" style="left:163.0px;top:1285.5px;width:1237.0px;height:116.5px;border:2px solid #c3c7cc;border-radius:8px;background:#f9f8f8"></div>
<div class="a" style="left:1411.7px;top:1285.5px;width:1237.3px;height:116.5px;border:2px solid #c3c7cc;border-radius:8px;background:#f9f8f8"></div>
<div class="a" style="left:0.0px;top:0.0px;width:2800.0px;height:112.0px;background:linear-gradient(rgba(0,0,0,.12) 0px,rgba(0,0,0,.07) 12px,rgba(0,0,0,.04) 40px,rgba(0,0,0,.015) 80px,rgba(0,0,0,0) 112px)"></div>
<div class="a" style="left:0.0px;top:1257.0px;width:2800.0px;height:65.0px;background:linear-gradient(rgba(0,0,0,0),rgba(0,0,0,.085))"></div></div><div class="a" style="left:0;top:0;width:2800px;height:176px;background:#fff"><div class="t" style="left:31.0px;top:37.3px;font-size:29.5px;color:#1f2329">P25002 SBUX Maple Grove &amp; Chinden TI</div>
<div class="t" style="left:29.0px;top:77.5px;font-size:59px;font-weight:bold;color:#1f2329">Bill</div>
<svg class="a" style="left:2716.0px;top:74.0px" width="28" height="28" viewBox="0 0 28 28"><path d="M2 2l24 24M26 2L2 26" stroke="#222" stroke-width="3"/></svg></div><div class="a" style="left:2464.5px;top:1530.0px;width:237.8px;height:72.0px;background:#80a6ea;border-radius:12px 0 0 12px"></div>
<div class="a" style="left:2703.3px;top:1530.0px;width:64.3px;height:72.0px;background:#0a50d8;border-radius:0 12px 12px 0"></div>
<div class="t" style="left:2496.0px;top:1554.8px;font-size:27.4px;font-weight:bold;color:#fff">Save &amp; Close</div>
<svg class="a" style="left:2724.0px;top:1561.0px" width="22" height="14" viewBox="0 0 22 14"><path d="M2 2l9 9 9-9" fill="none" stroke="#fff" stroke-width="2.6"/></svg></div>
<div id="taskbar" class="a">
 <!-- win -->
 <svg class="a" style="left:40px;top:25px" width="48" height="48" viewBox="0 0 48 48"><defs><linearGradient id="wg" x1="0" y1="0" x2="1" y2="1"><stop offset="0" stop-color="#6fd5fb"/><stop offset="1" stop-color="#1b9ee8"/></linearGradient></defs><rect x="0" y="0" width="22.5" height="22.5" rx="2" fill="url(#wg)"/><rect x="25.5" y="0" width="22.5" height="22.5" rx="2" fill="url(#wg)"/><rect x="0" y="25.5" width="22.5" height="22.5" rx="2" fill="url(#wg)"/><rect x="25.5" y="25.5" width="22.5" height="22.5" rx="2" fill="url(#wg)"/></svg>
 <!-- m365 -->
 <svg class="a" style="left:130px;top:25px" width="50" height="48" viewBox="0 0 50 48"><defs><linearGradient id="mg" x1="0" y1="0" x2="1" y2="1"><stop offset="0" stop-color="#1cb0f6"/><stop offset=".5" stop-color="#f3c23a"/><stop offset="1" stop-color="#e94fa8"/></linearGradient></defs><path d="M8 4h24l-10 34H6q-6 0-4-8z" fill="url(#mg)"/><path d="M26 10h14q8 0 6 10l-4 18H20z" fill="#b05ce6"/><rect x="16" y="31" width="32" height="15" fill="#111"/><text x="17" y="44" font-family="Liberation Sans" font-size="12" font-weight="bold" fill="#fff">M365</text></svg>
 <!-- outlook -->
 <svg class="a" style="left:218px;top:25px" width="49" height="46" viewBox="0 0 49 46"><path d="M14 8l20-6 14 10v24H14z" fill="#1aa3e8"/><path d="M14 20l34-8v24H14z" fill="#2b7cd3"/><rect x="0" y="12" width="24" height="24" rx="3" fill="#0a5fb8"/><circle cx="12" cy="24" r="6.5" fill="none" stroke="#fff" stroke-width="3"/></svg>
 <!-- files -->
 <svg class="a" style="left:306px;top:26px" width="48" height="44" viewBox="0 0 48 44"><path d="M0 4q0-4 4-4h14l4 4h22q4 0 4 4v32q0 4-4 4H4q-4 0-4-4z" fill="#f8c849"/><path d="M0 10h48v30q0 4-4 4H4q-4 0-4-4z" fill="#fbd86a"/><rect x="10" y="28" width="28" height="16" rx="4" fill="#1f8ee0"/><rect x="15" y="32" width="18" height="3" fill="#0b5aa0"/></svg>
 <!-- V -->
 <svg class="a" style="left:393px;top:25px" width="49" height="48" viewBox="0 0 49 48"><path d="M8 0h41v48H0V8z" fill="#0b4f8a"/><path d="M8 0h20L0 30V8z" fill="#2cc7f0"/><path d="M19 20h6l5 15 5-15h6l-9 22h-4z" fill="#fff"/></svg>
 <!-- chrome active -->
 <div class="a" style="left:466px;top:9px;width:80px;height:78px;border-radius:8px;background:#2c2c2c"></div>
 <svg class="a" style="left:481px;top:25px" width="49" height="49" viewBox="0 0 49 49"><circle cx="24.5" cy="24.5" r="24" fill="#de4436"/><path d="M24.5 24.5L3.7 12.5A24 24 0 0 0 24.5 48.5z" fill="#1da462"/><path d="M24.5 24.5L45.3 12.5A24 24 0 0 1 24.5 48.5z" fill="#ffcd46"/><circle cx="24.5" cy="24.5" r="11" fill="#fff"/><circle cx="24.5" cy="24.5" r="8.5" fill="#4c8bf5"/></svg>
 <div class="a" style="left:490px;top:80px;width:32px;height:6px;border-radius:3px;background:#4cc2ff"></div>
 <!-- word -->
 <svg class="a" style="left:569px;top:26px" width="49" height="44" viewBox="0 0 49 44"><rect x="12" y="0" width="37" height="44" rx="3" fill="#2b7cd3"/><rect x="12" y="0" width="37" height="14" fill="#41a5ee"/><rect x="12" y="29" width="37" height="15" fill="#185abd"/><rect x="0" y="9" width="26" height="26" rx="3" fill="#185abd"/><path d="M5 15l3 14 4-10 4 10 3-14" fill="none" stroke="#fff" stroke-width="2.6"/></svg>
 <!-- excel -->
 <svg class="a" style="left:657px;top:26px" width="49" height="44" viewBox="0 0 49 44"><rect x="12" y="0" width="37" height="44" rx="3" fill="#21a366"/><rect x="30" y="0" width="19" height="14" fill="#33c481"/><rect x="12" y="29" width="37" height="15" fill="#107c41"/><rect x="0" y="9" width="26" height="26" rx="3" fill="#107c41"/><path d="M7 15l12 14M19 15L7 29" stroke="#fff" stroke-width="2.8"/></svg>
 <!-- red app -->
 <svg class="a" style="left:746px;top:25px" width="48" height="48" viewBox="0 0 48 48"><rect width="48" height="48" rx="10" fill="#e8485c"/><path d="M10 20l24-6v5l-24 6zM14 30l24-6v5l-24 6z" fill="#fff"/></svg>
 <!-- teams -->
 <svg class="a" style="left:832px;top:26px" width="50" height="46" viewBox="0 0 50 46"><circle cx="42" cy="10" r="5" fill="#5059c9"/><rect x="34" y="18" width="16" height="20" rx="5" fill="#5059c9"/><circle cx="28" cy="9" r="7" fill="#7b83eb"/><rect x="16" y="18" width="26" height="28" rx="8" fill="#7b83eb"/><rect x="0" y="12" width="24" height="24" rx="3" fill="#4b53bc"/><path d="M5 18h14M12 18v13" stroke="#fff" stroke-width="3"/></svg>
 <div class="a" style="left:860px;top:13px;width:32px;height:32px;border-radius:16px;background:#c42b1c"></div>
 <div class="t" style="left:868px;top:17px;font-size:24px;color:#fff">4</div>
 <!-- R app -->
 <svg class="a" style="left:923px;top:25px" width="47" height="48" viewBox="0 0 47 48"><circle cx="23.5" cy="24" r="23.5" fill="#1b8fe0"/><path d="M13 40V12h14q9 0 9 9t-9 9h-8l14 12" fill="none" stroke="#fff" stroke-width="5"/></svg>
 <div class="a" style="left:236.7px;top:82px;width:11px;height:5px;border-radius:3px;background:#9a9a9a"></div>
<div class="a" style="left:324.8px;top:82px;width:11px;height:5px;border-radius:3px;background:#9a9a9a"></div>
<div class="a" style="left:412.0px;top:82px;width:11px;height:5px;border-radius:3px;background:#9a9a9a"></div>
<div class="a" style="left:588.8px;top:82px;width:11px;height:5px;border-radius:3px;background:#9a9a9a"></div>
<div class="a" style="left:676.8px;top:82px;width:11px;height:5px;border-radius:3px;background:#9a9a9a"></div>
<div class="a" style="left:764.4px;top:82px;width:11px;height:5px;border-radius:3px;background:#9a9a9a"></div>
<div class="a" style="left:852.4px;top:82px;width:11px;height:5px;border-radius:3px;background:#9a9a9a"></div>
<div class="a" style="left:940.5px;top:82px;width:11px;height:5px;border-radius:3px;background:#9a9a9a"></div>

 <!-- tray -->
 <svg class="a" style="left:2719px;top:44px" width="23" height="14" viewBox="0 0 23 14"><path d="M2 12L11.5 2 21 12" fill="none" stroke="#fff" stroke-width="2.4"/></svg>
 <svg class="a" style="left:2778px;top:37px" width="34" height="22" viewBox="0 0 34 22"><path d="M8 22a8 8 0 0 1-1-16 10 10 0 0 1 19 0 7 7 0 0 1 1 16z" fill="#0f78d4"/><path d="M4 22q4-10 14-8t16 8z" fill="#3ba4ec"/></svg>
 <svg class="a" style="left:2843px;top:35px" width="32" height="24" viewBox="0 0 32 24"><path d="M2 8a20 20 0 0 1 28 0M6.5 12.5a13.5 13.5 0 0 1 19 0M11 17a7 7 0 0 1 10 0" fill="none" stroke="#fff" stroke-width="2.3"/><circle cx="16" cy="21.5" r="2.5" fill="#fff"/></svg>
 <svg class="a" style="left:2890px;top:35px" width="33" height="25" viewBox="0 0 33 25"><path d="M2 8h6l8-6v21l-8-6H2z" fill="none" stroke="#fff" stroke-width="2.2" stroke-linejoin="round"/><path d="M21 8q3 4.5 0 9M25 5q5 7.5 0 15M29 2q7 10.5 0 21" fill="none" stroke="#fff" stroke-width="2.2"/></svg>
 <svg class="a" style="left:2938px;top:33px" width="34" height="28" viewBox="0 0 34 28"><rect x="2" y="7" width="26" height="19" rx="3" fill="none" stroke="#fff" stroke-width="2.2"/><rect x="28" y="13" width="4" height="7" fill="#fff"/><path d="M4 24q0-16 12-22q-6 10-12 22" fill="#fff"/></svg>
 <div class="t" style="left:2962px;top:19px;width:150px;text-align:right;font-size:24px;color:#fff">2:04 PM</div>
 <div class="t" style="left:2962px;top:50px;width:151px;text-align:right;font-size:24.5px;color:#fff">3/12/2025</div>
 <svg class="a" style="left:3130px;top:34px" width="28" height="31" viewBox="0 0 28 31"><path d="M14 1q9 0 10 10v8l4 5H0l4-5v-8Q5 1 14 1z" fill="#8fd8f8"/><path d="M9 26a5 5 0 0 0 10 0z" fill="#8fd8f8"/></svg>
</div>

</body></html>
